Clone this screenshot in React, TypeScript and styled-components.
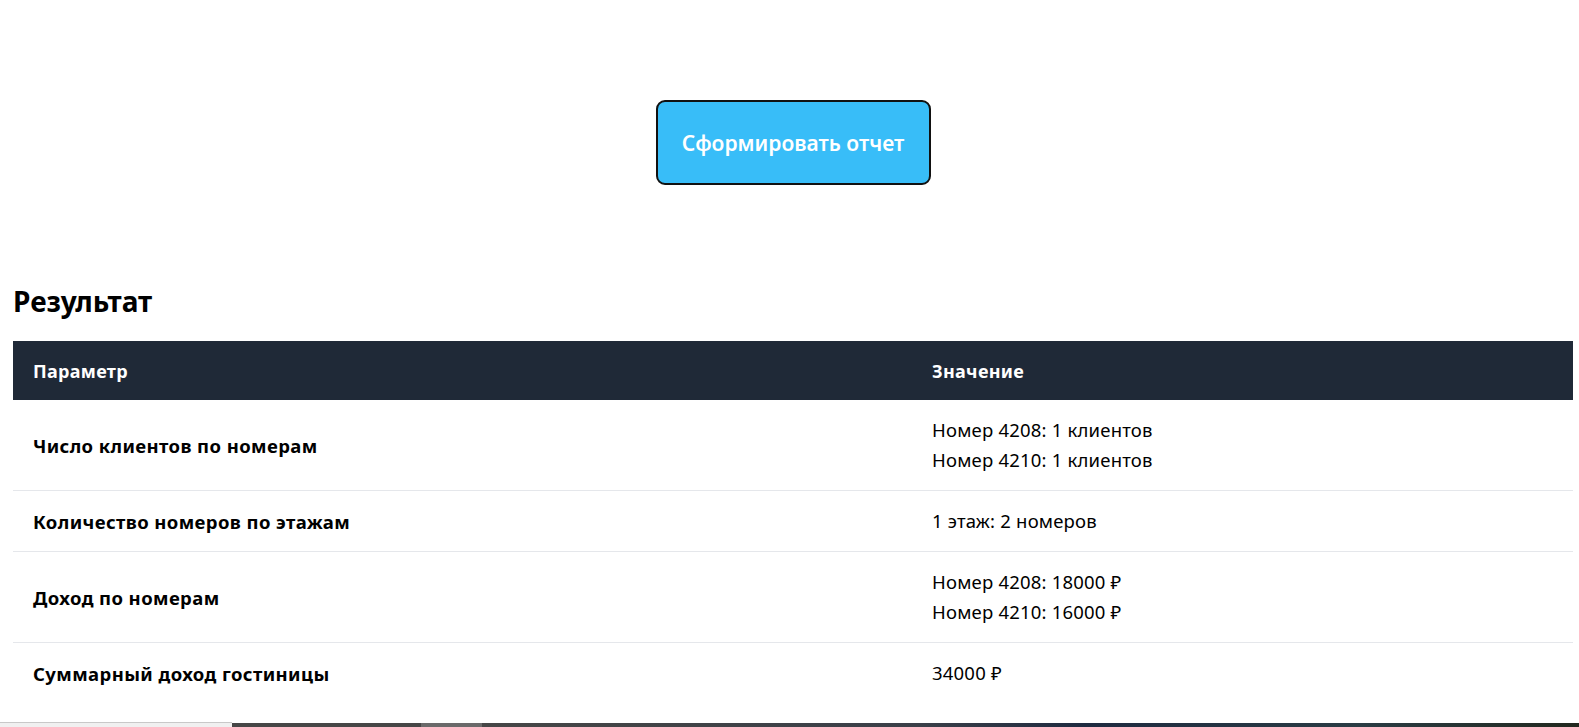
import React from "react";
import styled, { createGlobalStyle } from "styled-components";

const GlobalStyle = createGlobalStyle`
  html, body {
    margin: 0;
    padding: 0;
    background: #ffffff;
    font-family: "Segoe UI", "Noto Sans", "Open Sans", sans-serif;
    color: #000000;
  }
  * { box-sizing: border-box; }
`;

const Page = styled.main`
  padding: 0 6px 0 13px;
  min-height: 727px;
`;

const ButtonRow = styled.div`
  display: flex;
  justify-content: center;
  padding-top: 100px;
`;

const ReportButton = styled.button`
  font-family: inherit;
  font-size: 21px;
  font-weight: 600;
  color: #ffffff;
  background: #38bdf8;
  border: 2px solid #111111;
  border-radius: 9px;
  padding: 0 20px;
  height: 85px;
  width: 275px;
  cursor: pointer;
`;

const Heading = styled.h2`
  margin: 98px 0 0 0;
  font-size: 28px;
  font-weight: 700;
  line-height: 36px;
`;

const TableCard = styled.div`
  margin-top: 22px;
  border-bottom-left-radius: 6px;
  border-bottom-right-radius: 6px;
  overflow: hidden;
`;

const Table = styled.table`
  width: 100%;
  border-collapse: collapse;
  table-layout: fixed;
`;

const HeadCell = styled.th<{ $w?: string }>`
  background: #1f2937;
  color: #ffffff;
  text-align: left;
  font-size: 18px;
  font-weight: 700;
  letter-spacing: 0.3px;
  height: 59px;
  padding: 0 20px;
  width: ${(p) => p.$w ?? "auto"};
`;

const Row = styled.tr`
  & + & td {
    border-top: 1px solid #e5e7eb;
  }
`;

const NameCell = styled.td`
  font-size: 18.5px;
  font-weight: 700;
  letter-spacing: 0.4px;
  padding: 15px 20px;
  vertical-align: middle;
`;

const ValueCell = styled.td`
  font-size: 18.5px;
  letter-spacing: 0.2px;
  padding: 15px 20px;
  vertical-align: middle;
`;

const ValueLine = styled.div`
  line-height: 30px;
`;

const Taskbar = styled.div`
  position: fixed;
  left: 0;
  right: 0;
  bottom: 0;
  height: 5px;
  display: flex;
`;

const BarSeg = styled.div<{ $w?: string; $bg: string; $top?: string }>`
  flex: ${(p) => (p.$w ? `0 0 ${p.$w}` : "1 1 auto")};
  background: ${(p) => p.$bg};
  border-top: 1px solid ${(p) => p.$top ?? "transparent"};
`;

const rows: { name: string; values: string[] }[] = [
  { name: "Число клиентов по номерам", values: ["Номер 4208: 1 клиентов", "Номер 4210: 1 клиентов"] },
  { name: "Количество номеров по этажам", values: ["1 этаж: 2 номеров"] },
  { name: "Доход по номерам", values: ["Номер 4208: 18000 ₽", "Номер 4210: 16000 ₽"] },
  { name: "Суммарный доход гостиницы", values: ["34000 ₽"] },
];

export default function App() {
  return (
    <>
      <GlobalStyle />
      <Page>
        <ButtonRow>
          <ReportButton>Сформировать отчет</ReportButton>
        </ButtonRow>
        <Heading>Результат</Heading>
        <TableCard>
          <Table>
            <thead>
              <tr>
                <HeadCell $w="899px">Параметр</HeadCell>
                <HeadCell>Значение</HeadCell>
              </tr>
            </thead>
            <tbody>
              {rows.map((r) => (
                <Row key={r.name}>
                  <NameCell>{r.name}</NameCell>
                  <ValueCell>
                    {r.values.map((v) => (
                      <ValueLine key={v}>{v}</ValueLine>
                    ))}
                  </ValueCell>
                </Row>
              ))}
            </tbody>
          </Table>
        </TableCard>
      </Page>
      <Taskbar>
        <BarSeg $w="232px" $bg="#f0f0f0" $top="#c8c8c8" />
        <BarSeg $w="189px" $bg="#464646" $top="#ffffff" />
        <BarSeg $w="61px" $bg="#6a6a6a" $top="#ffffff" />
        <BarSeg $bg="linear-gradient(90deg, #464646 0%, #3a3f48 40%, #1e2a40 55%, #2a3c44 80%, #22281e 100%)" $top="#ffffff" />
      </Taskbar>
    </>
  );
}
